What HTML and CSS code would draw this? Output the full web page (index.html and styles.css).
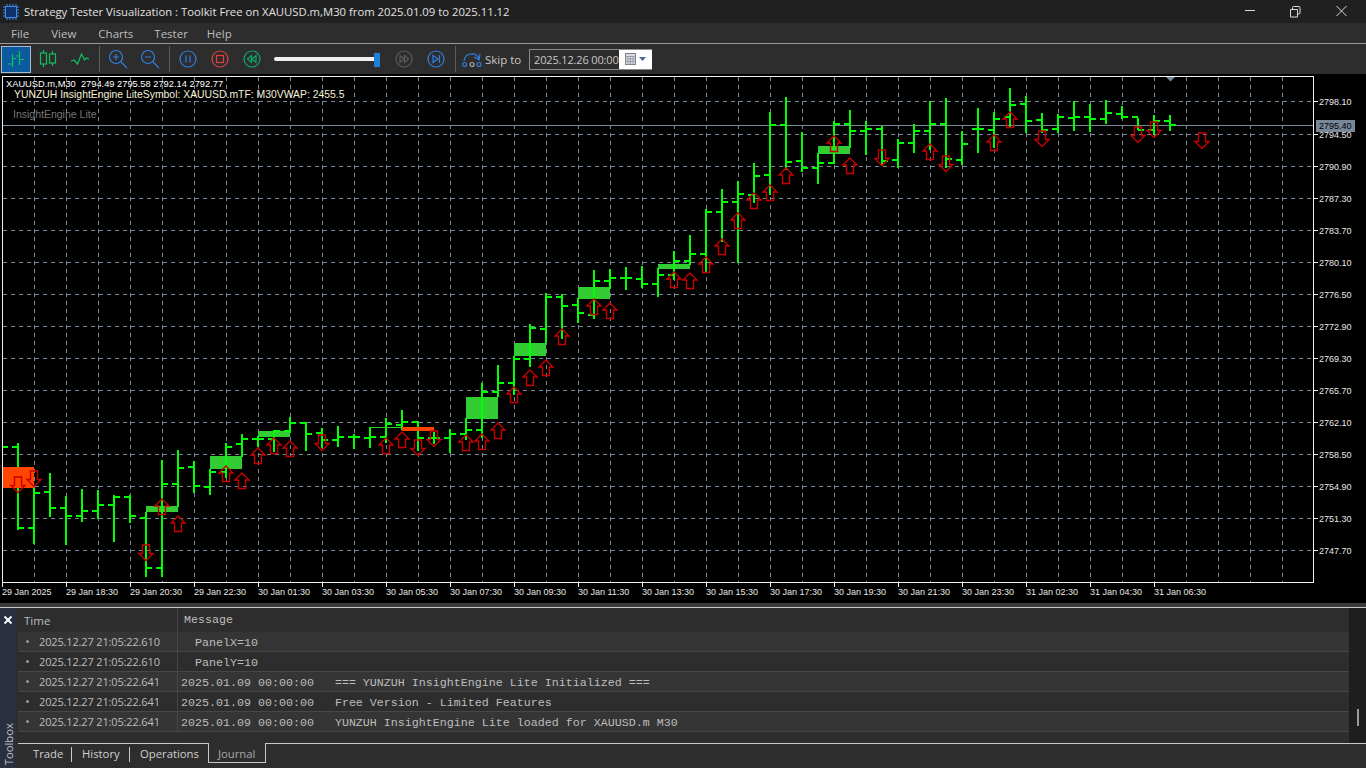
FILE: index.html
```html
<!DOCTYPE html>
<html lang="en">
<head>
<meta charset="utf-8">
<title>Strategy Tester Visualization</title>
<link rel="stylesheet" href="styles.css">
</head>
<body>
<div class="app">
  <header class="titlebar">
    <svg class="chip" width="16" height="16" viewBox="0 0 16 16"><path class="chip-pins" d="M4 0v16M7 0v16M10 0v16M13 0v16M0 3h16M0 6h16M0 9h16M0 12h16"/><rect class="chip-body" x="2.500" y="2.500" width="11" height="11"/></svg>
    <span class="title-text">Strategy Tester Visualization : Toolkit Free on XAUUSD.m,M30 from 2025.01.09 to 2025.11.12</span>
    <div class="winctl">
      <svg class="winbtn" width="46" height="20" viewBox="0 0 46 20"><path d="M19 8.500h10"/></svg>
      <svg class="winbtn" width="46" height="20" viewBox="0 0 46 20"><path d="M18.500 7.500h7v7.500h-7zM20.500 7.500v-2q0-1 1-1h5.500q1 0 1 1v5.500q0 1-1 1h-1.500"/></svg>
      <svg class="winbtn" width="46" height="20" viewBox="0 0 46 20"><path d="M18.500 4l10 10M28.500 4l-10 10"/></svg>
    </div>
  </header>

  <nav class="menubar">
    <span class="menu-item">File</span>
    <span class="menu-item">View</span>
    <span class="menu-item">Charts</span>
    <span class="menu-item">Tester</span>
    <span class="menu-item">Help</span>
  </nav>

  <div class="toolbar">
    <div class="tb-btn tb-active"><svg width="20" height="20" viewBox="0 0 20 20"><path class="i-green" d="M6.500 5v13M2 15h4.500M6.500 9.500H10M13.500 2v14M10 7h3.500M13.500 10.500H18"/></svg></div>
    <div class="tb-btn"><svg width="20" height="20" viewBox="0 0 20 20"><path class="i-green" d="M5.500 1v3M5.500 15v3M14.500 2v3M14.500 14v3"/><rect class="i-green" x="2.500" y="4" width="6" height="11"/><rect class="i-green" x="11.500" y="5" width="6" height="9"/></svg></div>
    <div class="tb-btn"><svg width="20" height="20" viewBox="0 0 20 20"><path class="i-green" d="M1 12l3-1 3.500 4 4-10 3 6 2-2 2.500 1"/></svg></div>
    <div class="tb-sep"></div>
    <div class="tb-btn"><svg width="20" height="20" viewBox="0 0 20 20"><circle class="i-blue" cx="8" cy="8" r="6.500"/><path class="i-blue" d="M8 5v6M5 8h6M13 13l6 6"/></svg></div>
    <div class="tb-btn"><svg width="20" height="20" viewBox="0 0 20 20"><circle class="i-blue" cx="8" cy="8" r="6.500"/><path class="i-blue" d="M5 8h6M13 13l6 6"/></svg></div>
    <div class="tb-sep"></div>
    <div class="tb-btn"><svg width="18" height="18" viewBox="0 0 18 18"><circle class="i-blue" cx="9" cy="9" r="8"/><path class="i-blue" d="M7 5.500v7M11 5.500v7"/></svg></div>
    <div class="tb-btn"><svg width="18" height="18" viewBox="0 0 18 18"><circle class="i-red" cx="9" cy="9" r="8"/><rect class="i-red" x="5.500" y="5.500" width="7" height="7"/></svg></div>
    <div class="tb-btn"><svg width="18" height="18" viewBox="0 0 18 18"><circle class="i-teal" cx="9" cy="9" r="8"/><path class="i-teal" d="M8.500 5.500l-4 3.500 4 3.500zM13 5.500l-4 3.500 4 3.500z"/></svg></div>
    <div class="slider"><div class="slider-track"></div><div class="slider-thumb"></div></div>
    <div class="tb-btn"><svg width="18" height="18" viewBox="0 0 18 18"><circle class="i-dim" cx="9" cy="9" r="8"/><path class="i-dim" d="M5 5.500l4 3.500-4 3.500zM9.500 5.500l4 3.500-4 3.500z"/></svg></div>
    <div class="tb-btn"><svg width="18" height="18" viewBox="0 0 18 18"><circle class="i-blue" cx="9" cy="9" r="8"/><path class="i-blue" d="M6 5.500l5 3.500-5 3.500zM12.500 5v8"/></svg></div>
    <div class="tb-sep"></div>
    <svg class="skip-icon" width="20" height="18" viewBox="0 0 20 18"><path class="i-blue" d="M2 11C3 3 14 1 17 9M18 3.500l-.7 6-5.300-2.500"/><circle class="i-blue" cx="2.500" cy="14.500" r="2"/><circle class="i-gray" cx="10" cy="14.500" r="2"/><circle class="i-blue" cx="17" cy="14.500" r="2"/></svg>
    <span class="skip-label">Skip to</span>
    <div class="date-input">
      <span class="date-value">2025.12.26 00:00</span>
      <div class="date-btn">
        <svg width="28" height="16" viewBox="0 0 28 16"><rect class="cal" x="1.500" y="2.500" width="10" height="11"/><path class="cal-lines" d="M1.500 5.500h10M1.500 8h10M1.500 10.500h10M4 5.500v8M6.500 5.500v8M9 5.500v8"/><path class="cal-arrow" d="M15 6h7l-3.500 4z"/></svg>
      </div>
    </div>
  </div>

  <section class="chart">
    <svg class="chart-svg" width="1366" height="529" viewBox="0 74 1366 529">
      <defs>
        <path id="up" d="M0 0L7 7H3.500V15.500H-3.500V7H-7Z"/>
        <path id="dn" d="M-3.500 0H3.500V8.500H7L0 15.500L-7 8.500H-3.500Z"/>
      </defs>
      <path class="grid" d="M3 101.500H1313M3 134.500H1313M3 166.500H1313M3 198.500H1313M3 230.500H1313M3 262.500H1313M3 294.500H1313M3 326.500H1313M3 358.500H1313M3 390.500H1313M3 422.500H1313M3 454.500H1313M3 486.500H1313M3 518.500H1313M3 550.500H1313"/>
      <path class="grid" d="M34.500 77V582M66.500 77V582M98.500 77V582M130.500 77V582M162.500 77V582M194.500 77V582M226.500 77V582M258.500 77V582M290.500 77V582M322.500 77V582M354.500 77V582M386.500 77V582M418.500 77V582M450.500 77V582M482.500 77V582M514.500 77V582M546.500 77V582M578.500 77V582M610.500 77V582M642.500 77V582M674.500 77V582M706.500 77V582M738.500 77V582M770.500 77V582M802.500 77V582M834.500 77V582M866.500 77V582M898.500 77V582M930.500 77V582M962.500 77V582M994.500 77V582M1026.500 77V582M1058.500 77V582M1090.500 77V582M1122.500 77V582M1154.500 77V582M1186.500 77V582M1218.500 77V582M1250.500 77V582M1282.500 77V582"/>
      <path class="bid" d="M3 125.500H1313"/>
      <path class="frame" d="M2.500 76.500H1313.500V582.500H2.500Z"/>
      <path class="ticks" d="M1313 101.500h5M1313 134.500h5M1313 166.500h5M1313 198.500h5M1313 230.500h5M1313 262.500h5M1313 294.500h5M1313 326.500h5M1313 358.500h5M1313 390.500h5M1313 422.500h5M1313 454.500h5M1313 486.500h5M1313 518.500h5M1313 550.500h5M2.500 582v5M66.500 582v5M130.500 582v5M194.500 582v5M258.500 582v5M322.500 582v5M386.500 582v5M450.500 582v5M514.500 582v5M578.500 582v5M642.500 582v5M706.500 582v5M770.500 582v5M834.500 582v5M898.500 582v5M962.500 582v5M1026.500 582v5M1090.500 582v5M1154.500 582v5"/>
      <path class="shift-mark" d="M1166 77h9l-4.500 4.500z"/>

      <rect class="box-g" x="146" y="506" width="32" height="6"/>
      <rect class="box-g" x="210" y="456" width="32" height="13"/>
      <rect class="box-g" x="258" y="431" width="32" height="6"/>
      <rect class="box-g" x="466" y="397" width="32" height="22"/>
      <rect class="box-g" x="514" y="343" width="32" height="13"/>
      <rect class="box-g" x="578" y="287" width="32" height="12"/>
      <rect class="box-g" x="658" y="264" width="32" height="5"/>
      <rect class="box-g" x="818" y="146" width="32" height="8"/>
      <path class="thin-g" d="M370 427.500H402"/>

      <path class="bars" d="M3 447H8
M18 443V530M12 447H18M18 528H24
M34 488V544M28 528H34M34 493H40
M50 473V517M44 492H50M50 508H56
M66 496V545M60 508H66M66 516H72
M82 489V522M76 516H82M82 511H88
M98 490V519M92 511H98M98 505H104
M114 495V542M108 505H114M114 497H120
M130 495V523M124 497H130M130 516H136
M146 512V577M140 518H146M146 568H152
M162 460V577M156 568H162M162 484H168
M178 450V507M172 484H178M178 468H184
M194 461V493M188 467H194M194 486H200
M210 469V495M204 487H210M210 472H216
M226 443V478M220 472H226M226 447H232
M242 434V457M236 444H242M242 439H248
M258 436V447M252 439H258M258 439H264
M274 430V452M268 439H274M274 431H280
M290 417V433M284 431H290M290 423H296
M306 422V451M300 423H306M306 434H312
M322 428V448M316 433H322M322 440H328
M338 426V447M332 440H338M338 437H344
M354 434V449M348 437H354M354 437H360
M370 427V448M364 438H370M370 437H376
M386 418V443M380 437H386M386 424H392
M402 410V430M396 425H402M402 422H408
M418 422V451M412 422H418M418 438H424
M434 432V444M428 438H434M434 438H440
M450 429V453M444 438H450M450 434H456
M466 418V440M460 434H466M466 430H472
M482 383V438M476 430H482M482 392H488
M498 365V397M492 392H498M498 383H504
M514 356V395M508 383H514M514 359H520
M530 324V367M524 359H530M530 328H536
M546 293V343M540 329H546M546 297H552
M562 294V339M556 297H562M562 306H568
M578 298V323M572 305H578M578 313H584
M594 270V319M588 315H594M594 281H600
M610 269V289M604 281H610M610 278H616
M626 267V290M620 278H626M626 278H632
M642 266V288M636 279H642M642 284H648
M658 268V297M652 284H658M658 275H664
M674 251V280M668 275H674M674 261H680
M690 235V265M684 261H690M690 254H696
M706 209V273M700 254H706M706 212H712
M722 189V242M716 212H722M722 202H728
M738 181V263M732 202H738M738 194H744
M754 163V203M748 195H754M754 176H760
M770 112V195M764 175H770M770 125H776
M786 97V170M780 125H786M786 162H792
M802 132V172M796 161H802M802 168H808
M818 153V184M812 168H818M818 163H824
M834 121V164M828 163H834M834 124H840
M850 110V148M844 124H850M850 131H856
M866 121V155M860 131H866M866 129H872
M882 126V166M876 129H882M882 161H888
M898 139V168M892 160H898M898 143H904
M914 124V153M908 143H914M914 131H920
M930 101V150M924 131H930M930 124H936
M946 98V168M940 124H946M946 159H952
M962 131V165M956 160H962M962 144H968
M978 108V153M972 129H978M978 129H984
M994 112V148M988 130H994M994 119H1000
M1010 88V128M1004 117H1010M1010 105H1016
M1026 96V133M1020 104H1026M1026 121H1032
M1042 113V133M1036 120H1042M1042 130H1048
M1058 114V133M1052 129H1058M1058 117H1064
M1074 101V131M1068 118H1074M1074 117H1080
M1090 104V132M1084 117H1090M1090 119H1096
M1106 100V124M1100 119H1106M1106 113H1112
M1122 106V119M1116 114H1122M1122 117H1128
M1138 118V130M1132 117H1138M1138 130H1144
M1154 115V135M1148 130H1154M1154 121H1160
M1170 115V131M1164 121H1170M1170 125H1176"/>

      <rect class="box-o" x="3" y="467" width="31" height="21"/>
      <rect class="box-o" x="402" y="427" width="32" height="4"/>

      <g class="arrows">
        <use href="#dn" x="18" y="477"/><use href="#dn" x="34" y="471"/><use href="#dn" x="146" y="545"/><use href="#dn" x="322" y="435"/><use href="#dn" x="418" y="440"/><use href="#dn" x="434" y="431"/><use href="#dn" x="882" y="150"/><use href="#dn" x="946" y="156"/><use href="#dn" x="1042" y="131"/><use href="#dn" x="1138" y="127"/><use href="#dn" x="1154" y="122"/><use href="#dn" x="1202" y="133"/>
        <use href="#up" x="162" y="499"/><use href="#up" x="178" y="516"/><use href="#up" x="226" y="466"/><use href="#up" x="242" y="473"/><use href="#up" x="258" y="448"/><use href="#up" x="274" y="438"/><use href="#up" x="290" y="441"/><use href="#up" x="386" y="438"/><use href="#up" x="402" y="432"/><use href="#up" x="466" y="435"/><use href="#up" x="482" y="434"/><use href="#up" x="498" y="423"/><use href="#up" x="514" y="387"/><use href="#up" x="530" y="370"/><use href="#up" x="546" y="360"/><use href="#up" x="562" y="329"/><use href="#up" x="594" y="299"/><use href="#up" x="610" y="303"/><use href="#up" x="674" y="272"/><use href="#up" x="690" y="273"/><use href="#up" x="706" y="257"/><use href="#up" x="722" y="239"/><use href="#up" x="738" y="213"/><use href="#up" x="754" y="193"/><use href="#up" x="770" y="185"/><use href="#up" x="786" y="168"/><use href="#up" x="834" y="136"/><use href="#up" x="850" y="158"/><use href="#up" x="930" y="144"/><use href="#up" x="994" y="135"/><use href="#up" x="1010" y="112"/>
      </g>

      <text class="ct" x="6" y="87" xml:space="preserve">XAUUSD.m,M30  2794.49 2795.58 2792.14 2792.77</text>
      <text class="ct-cream" x="14" y="98">YUNZUH InsightEngine LiteSymbol: XAUUSD.mTF: M30VWAP: 2455.5</text>
      <text class="ct-gray" x="13" y="118">InsightEngine Lite</text>

      <g class="axis">
        <text x="1319" y="105">2798.10</text><text x="1319" y="138">2794.50</text><text x="1319" y="170">2790.90</text><text x="1319" y="202">2787.30</text><text x="1319" y="234">2783.70</text><text x="1319" y="266">2780.10</text><text x="1319" y="298">2776.50</text><text x="1319" y="330">2772.90</text><text x="1319" y="362">2769.30</text><text x="1319" y="394">2765.70</text><text x="1319" y="426">2762.10</text><text x="1319" y="458">2758.50</text><text x="1319" y="490">2754.90</text><text x="1319" y="522">2751.30</text><text x="1319" y="554">2747.70</text>
        <text x="2" y="595">29 Jan 2025</text><text x="66" y="595">29 Jan 18:30</text><text x="130" y="595">29 Jan 20:30</text><text x="194" y="595">29 Jan 22:30</text><text x="258" y="595">30 Jan 01:30</text><text x="322" y="595">30 Jan 03:30</text><text x="386" y="595">30 Jan 05:30</text><text x="450" y="595">30 Jan 07:30</text><text x="514" y="595">30 Jan 09:30</text><text x="578" y="595">30 Jan 11:30</text><text x="642" y="595">30 Jan 13:30</text><text x="706" y="595">30 Jan 15:30</text><text x="770" y="595">30 Jan 17:30</text><text x="834" y="595">30 Jan 19:30</text><text x="898" y="595">30 Jan 21:30</text><text x="962" y="595">30 Jan 23:30</text><text x="1026" y="595">31 Jan 02:30</text><text x="1090" y="595">31 Jan 04:30</text><text x="1154" y="595">31 Jan 06:30</text>
      </g>
      <rect class="price-tag" x="1316" y="120" width="39" height="12"/>
      <text class="price-tag-text" x="1319" y="129">2795.40</text>
    </svg>
  </section>
  <div class="divider"></div>

  <section class="toolbox">
    <aside class="strip">
      <svg class="strip-x" width="10" height="10" viewBox="0 0 10 10"><path d="M1.500 1.500l7 7M8.500 1.500l-7 7"/></svg>
      <span class="strip-label">Toolbox</span>
    </aside>
    <div class="panel">
      <div class="table-wrap">
        <div class="table">
          <div class="row head">
            <div class="cell-time head-time">Time</div>
            <div class="cell-msg">Message</div>
          </div>
          <div class="row alt"><div class="cell-time"><i class="dot"></i>2025.12.27 21:05:22.610</div><div class="cell-msg">  PanelX=10</div></div>
          <div class="row"><div class="cell-time"><i class="dot"></i>2025.12.27 21:05:22.610</div><div class="cell-msg">  PanelY=10</div></div>
          <div class="row alt"><div class="cell-time"><i class="dot"></i>2025.12.27 21:05:22.641</div><div class="cell-msg">2025.01.09 00:00:00   === YUNZUH InsightEngine Lite Initialized ===</div></div>
          <div class="row"><div class="cell-time"><i class="dot"></i>2025.12.27 21:05:22.641</div><div class="cell-msg">2025.01.09 00:00:00   Free Version - Limited Features</div></div>
          <div class="row alt"><div class="cell-time"><i class="dot"></i>2025.12.27 21:05:22.641</div><div class="cell-msg">2025.01.09 00:00:00   YUNZUH InsightEngine Lite loaded for XAUUSD.m M30</div></div>
        </div>
        <div class="scroll"><div class="scroll-thumb"></div></div>
      </div>
      <div class="tabs">
        <span class="tab tab-trade">Trade</span>
        <span class="tab tab-history">History</span>
        <span class="tab tab-ops">Operations</span>
        <span class="tab tab-active">Journal</span>
        <span class="tab-fill"></span>
      </div>
    </div>
  </section>
</div>
</body>
</html>
```

FILE: styles.css
```css
* { box-sizing: border-box; }
html, body { margin: 0; padding: 0; }
body { width: 1366px; height: 768px; overflow: hidden; background: #2d2d2d; font-family: "Open Sans", "Noto Sans", sans-serif; color: #c8c8c8; }
.app { display: flex; flex-direction: column; height: 768px; }

.titlebar { height: 23px; background: #202020; display: flex; align-items: center; padding-left: 3px; flex: none; }
.chip { flex: none; }
.chip-pins { stroke: #3f8cf0; stroke-width: 1; fill: none; }
.chip-body { fill: #10326a; stroke: #3f8cf0; }
.title-text { margin-left: 5px; font-size: 11.3px; color: #e0e0e0; white-space: nowrap; }
.winctl { margin-left: auto; display: flex; padding-right: 2px; }
.winbtn path { fill: none; stroke: #d8d8d8; stroke-width: 1; }

.menubar { height: 21px; background: #2d2d2d; display: flex; align-items: center; font-size: 11.5px; color: #bdbdbd; padding-left: 11px; flex: none; border-bottom: 1px solid #9a9a9a; }
.menu-item { margin-right: 22px; }
.menu-item:nth-child(3) { margin-right: 21px; }
.menu-item:nth-child(4) { margin-right: 19px; }

.toolbar { height: 30px; background: #2d2d2d; display: flex; align-items: center; flex: none; }
.tb-btn { width: 30px; height: 27px; margin: 0 1px; display: flex; align-items: center; justify-content: center; flex: none; }
.tb-active { background: #0b5a9e; border: 1px solid #a6b8ca; }
.tb-sep { width: 6px; height: 26px; flex: none; }
.tb-sep::before { content: ""; display: block; width: 1px; height: 26px; margin-left: 3px; background: #5a5a5a; }
.i-green, .i-blue, .i-red, .i-teal, .i-dim, .i-gray { fill: none; stroke-width: 1.2; }
.i-green { stroke: #10c060; }
.i-blue { stroke: #2f7fe0; }
.i-red { stroke: #e04040; }
.i-teal { stroke: #10a868; }
.i-dim { stroke: #5a5a5a; }
.i-gray { stroke: #a8a8a8; }

.slider { width: 120px; height: 27px; flex: none; position: relative; display: flex; align-items: center; padding-left: 6px; }
.slider-track { width: 104px; height: 4px; background: #f0f0f0; border-radius: 2px; }
.slider-thumb { position: absolute; left: 106px; top: 7px; width: 6px; height: 14px; background: #1c7fd8; }

.skip-icon { margin-left: 4px; flex: none; }
.skip-label { margin-left: 3px; font-size: 11.5px; color: #c8c8c8; width: 44px; flex: none; }
.date-input { display: flex; height: 21px; width: 123px; flex: none; border: 1px solid #8a8a8a; }
.date-value { flex: none; width: 89px; padding-left: 4px; font-size: 11px; letter-spacing: -0.15px; line-height: 19px; color: #c8c8c8; white-space: nowrap; }
.date-btn { flex: 1; background: #fff; display: flex; align-items: center; padding-left: 5px; }
.cal { fill: #d8dde4; stroke: #7a7f88; stroke-width: 1; }
.cal-lines { stroke: #9aa0a8; stroke-width: 1; fill: none; }
.cal-arrow { fill: #4a6a9a; }

.chart { height: 529px; background: #000; flex: none; }
.chart-svg { display: block; }
.grid { fill: none; stroke: #778899; stroke-width: 1; stroke-dasharray: 4 4; shape-rendering: crispEdges; }
.bid { fill: none; stroke: #778899; stroke-width: 1; shape-rendering: crispEdges; }
.frame { fill: none; stroke: #f0f0f0; stroke-width: 1; shape-rendering: crispEdges; }
.ticks { fill: none; stroke: #f0f0f0; stroke-width: 1; shape-rendering: crispEdges; }
.shift-mark { fill: #778899; }
.box-o { fill: #ff4500; }
.box-g { fill: #32cd32; }
.thin-g { stroke: #32cd32; stroke-width: 1; fill: none; shape-rendering: crispEdges; }
.bars { fill: none; stroke: #00ff00; stroke-width: 2; shape-rendering: crispEdges; }
.arrows { fill: none; stroke: #c80000; stroke-width: 1.4; }
.ct { white-space: pre; font-family: "Liberation Sans", Arial, sans-serif; font-size: 9.3px; fill: #fff; }
.ct-cream { font-family: "Liberation Sans", Arial, sans-serif; font-size: 10.4px; fill: #f5f0d8; }
.ct-gray { font-family: "Liberation Sans", Arial, sans-serif; font-size: 10.5px; fill: #777; }
.axis text { font-family: "Liberation Sans", Arial, sans-serif; font-size: 9px; fill: #e8e8e8; }
.price-tag { fill: #778899; }
.price-tag-text { font-family: "Liberation Sans", Arial, sans-serif; font-size: 9px; fill: #000; }

.divider { height: 5px; flex: none; background: #3a3a3a; border-bottom: 1px solid #c8c8c8; }

.toolbox { flex: 1; display: flex; min-height: 0; background: #2d2d2d; }
.strip { width: 16px; flex: none; background: #2b3040; display: flex; flex-direction: column; align-items: center; justify-content: space-between; padding: 7px 0 3px; }
.strip-x path { stroke: #fff; stroke-width: 1.800; fill: none; }
.strip-label { writing-mode: vertical-rl; transform: rotate(180deg); font-size: 11.3px; color: #c0c0c0; }
.panel { flex: 1; min-width: 0; margin-left: 2px; display: flex; flex-direction: column; }
.table-wrap { height: 135px; flex: none; display: flex; }
.table { flex: 1; min-width: 0; }
.scroll { width: 17px; flex: none; background: #1e1e1e; position: relative; }
.scroll-thumb { position: absolute; left: 8px; top: 101px; width: 2px; height: 17px; background: #9a9a9a; }

.row { height: 20px; display: flex; background: #2d2d2d; border-bottom: 1px solid #474747; }
.row.alt { background: #353535; }
.row.head { height: 24px; border-bottom: 0; }
.cell-time { width: 160px; flex: none; border-right: 1px solid #474747; font-size: 11px; letter-spacing: -0.15px; color: #bdbdbd; padding-left: 8px; display: flex; align-items: center; white-space: nowrap; }
.head-time { padding-left: 6px; font-size: 11.5px; letter-spacing: 0; }
.dot { width: 3px; height: 3px; border-radius: 50%; background: #999; margin-right: 10px; flex: none; }
.cell-msg { padding-left: 3px; font-family: "Liberation Mono", "Courier New", monospace; font-size: 11.67px; line-height: 22px; color: #bdbdbd; white-space: pre; }
.head .cell-msg { line-height: 24px; padding-left: 6px; }

.tabs { flex: 1; display: flex; font-size: 11.3px; color: #d0d0d0; }
.tab { height: 20px; line-height: 19px; flex: none; border-top: 1px solid #c8c8c8; }
.tab-trade { width: 54px; padding-left: 15px; position: relative; }
.tab-history { width: 58px; padding-left: 10px; position: relative; }
.tab-ops { width: 78px; padding-left: 10px; }
.tab-trade::after, .tab-history::after { content: ""; position: absolute; right: 0; top: 3px; width: 1px; height: 15px; background: #c8c8c8; }
.tab-active { width: 58px; padding-left: 9px; color: #a8a8a8; border: 1px solid #c8c8c8; border-top: 0; padding-top: 1px; }
.tab-fill { flex: 1; height: 20px; border-top: 1px solid #c8c8c8; }
```
